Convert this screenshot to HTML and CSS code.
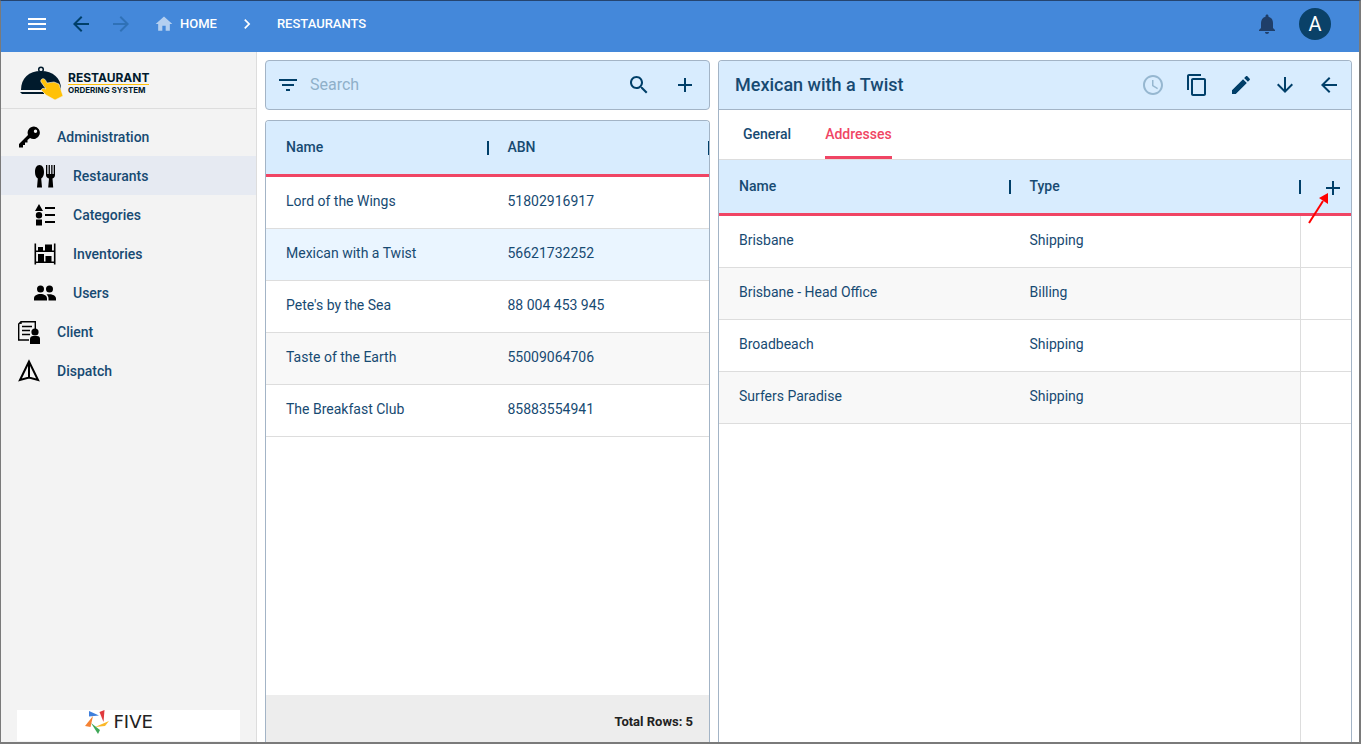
FILE: index.html
```html
<!DOCTYPE html>
<html lang="en">
<head>
    <meta charset="UTF-8">
    <meta name="viewport" content="width=device-width, initial-scale=1.0">
    <title>Restaurant Ordering System</title>
    <link rel="stylesheet" href="styles.css">
</head>
<body>
    <div class="app">
        <header class="topbar">
            <button class="icon-btn light" aria-label="Menu"><svg viewBox="0 0 24 24"><path d="M3 18h18v-2H3v2zm0-5h18v-2H3v2zm0-7v2h18V6H3z"/></svg></button>
            <button class="icon-btn back" aria-label="Back"><svg viewBox="0 0 24 24"><path d="M20 11H7.83l5.59-5.59L12 4l-8 8 8 8 1.41-1.41L7.83 13H20v-2z"/></svg></button>
            <button class="icon-btn forward" aria-label="Forward" disabled><svg viewBox="0 0 24 24"><path d="M12 4l-1.41 1.41L16.17 11H4v2h12.17l-5.58 5.59L12 20l8-8z"/></svg></button>
            <nav class="breadcrumb" aria-label="Breadcrumb">
                <a href="#"><svg class="home" viewBox="0 0 24 24"><path d="M10 20v-6h4v6h5v-8h3L12 3 2 12h3v8z"/></svg>HOME</a>
                <svg class="chevron" viewBox="0 0 24 24"><path d="M10 6L8.59 7.41 13.17 12l-4.58 4.59L10 18l6-6z"/></svg>
                <a href="#">RESTAURANTS</a>
            </nav>
            <button class="icon-btn bell" aria-label="Notifications"><svg viewBox="0 0 24 24"><path d="M12 22c1.1 0 2-.9 2-2h-4c0 1.100.89 2 2 2zm6-6v-5c0-3.070-1.640-5.640-4.500-6.320V4c0-.83-.67-1.500-1.500-1.500s-1.500.67-1.500 1.500v.68C7.630 5.360 6 7.920 6 11v5l-2 2v1h16v-1l-2-2z"/></svg></button>
            <button class="avatar">A</button>
        </header>

        <aside class="sidebar">
            <div class="brand">
                <svg class="brand-icon" viewBox="0 0 44 34">
                    <circle cx="21" cy="3.500" r="2.300" fill="none" stroke="#001a2c" stroke-width="1.500"/>
                    <path d="M1 24C1 12 9 5 21 5s20 7 20 18v1z" fill="#001a2c"/>
                    <path d="M0 26h24v2H2z" fill="#001a2c"/>
                    <path d="M22 13c2-1 3.500.5 5 4l7-1 5 2 4 12-8 4-9-5-5-5c1-2 3-2 5-1l-5-7c-.6-1.300 0-2.400 1-3z" fill="#ffc107" stroke="#f3f3f3" stroke-width=".6"/>
                </svg>
                <div class="brand-name">
                    <span class="brand-main">RESTAURANT</span>
                    <span class="brand-sub">ORDERING SYSTEM</span>
                </div>
            </div>

            <nav class="menu">
                <a href="#"><svg viewBox="0 0 24 24"><path fill-rule="evenodd" d="M17 1.500a6.300 6.300 0 0 0-6 8.500L2 19v3.500h4V20h2v-2.500h2.500V15l2.500-2a6.300 6.300 0 1 0 4-11.500zm1.500 3a1.700 1.700 0 1 1 0 3.400 1.700 1.700 0 0 1 0-3.400z"/></svg>Administration</a>
                <a href="#" class="nested active"><svg viewBox="0 0 24 24"><path d="M6.500 1C9.500 1 11 4.200 11 8c0 3-1 5.500-2.800 6.400L9 23.500H4l.8-9.100C3 13.500 2 11 2 8c0-3.800 1.500-7 4.500-7zM13 1h1.300v9h1.300V1h1.300v9h1.300V1h1.300v9h1.200V1H22v10c0 2-1 3-2.500 3.500l.7 9h-5l.8-9C14.200 14 13 13 13 11z"/></svg>Restaurants</a>
                <a href="#" class="nested"><svg viewBox="0 0 24 24"><path d="M6 1l4 7H2zM6 9a3.200 3.200 0 1 1 0 6.400A3.200 3.200 0 0 1 6 9zM3 16.500h6v6H3zM12 4h10v2H12zM12 11h10v2H12zM12 18h10v2H12z"/></svg>Categories</a>
                <a href="#" class="nested"><svg viewBox="0 0 24 24"><path d="M1.500 1.500h1.600v7h17.800v-7h1.600v21h-1.600V21H3.100v1.500H1.500zM3.100 10v9.500h17.800V10z" fill-rule="evenodd"/><path d="M5 5h5v4H5zM12 2.500h7V9h-7zM5 12h6v8H5zM12.500 14h6v6h-6z"/></svg>Inventories</a>
                <a href="#" class="nested"><svg viewBox="0 0 24 24"><path d="M7.500 4.500a3.500 3.500 0 1 1 0 7 3.500 3.500 0 0 1 0-7zM16.500 4.500a3.500 3.500 0 1 1 0 7 3.500 3.500 0 0 1 0-7zM1 19.500v-2C1 14.500 4 13 7.500 13s6.500 1.500 6.500 4.500v2zM15.500 19.500v-2c0-1.800-.8-3-2-4 4.500-1 9.500.5 9.500 4v2z"/></svg>Users</a>
                <a href="#"><svg viewBox="0 0 24 24"><path d="M12 20H1.700V4L4 1.700h14.300V9M4 1.700V4M5 6.500h10M5 10.500h8M5 14.500h8" fill="none" stroke="#000" stroke-width="1.400"/><circle cx="18" cy="12" r="3.600"/><path d="M13 24v-5c0-2 1.500-3 3-3h4c2 0 3 1 3 3v5z"/></svg>Client</a>
                <a href="#"><svg viewBox="0 0 24 24"><path d="M12 2.500L3 21l9-2.500 9 2.500zM12 2.500v16" fill="none" stroke="#000" stroke-width="2"/></svg>Dispatch</a>
            </nav>

            <div class="vendor">
                <div class="vendor-logo">
                    <svg viewBox="0 0 24 24">
                        <path d="M4 1l10 4.500-10 1z" fill="#3f7fdc"/>
                        <path d="M19.500 0l-1 12-4-10z" fill="#e03a3e"/>
                        <path d="M24 11l-4 5-10 1z" fill="#fbb829"/>
                        <path d="M6 13l9 7-2 4z" fill="#3fa757"/>
                        <path d="M8 6L5.500 17 0 16z" fill="#f58233"/>
                    </svg>
                    <span>FIVE</span>
                </div>
            </div>
        </aside>

        <main class="content">
            <section class="list">
                <div class="search panel">
                    <button class="icon-btn" aria-label="Filter"><svg viewBox="0 0 24 24"><path d="M10 18h4v-2h-4v2zM3 6v2h18V6H3zm3 7h12v-2H6v2z"/></svg></button>
                    <input type="text" placeholder="Search" aria-label="Search">
                    <button class="icon-btn" aria-label="Run search"><svg viewBox="0 0 24 24"><path d="M15.500 14h-.79l-.28-.27C15.410 12.590 16 11.110 16 9.500 16 5.910 13.090 3 9.500 3S3 5.910 3 9.500 5.910 16 9.500 16c1.610 0 3.090-.59 4.230-1.570l.27.28v.79l5 4.990L20.490 19l-4.990-5zm-6 0C7.010 14 5 11.990 5 9.500S7.010 5 9.500 5 14 7.010 14 9.500 11.990 14 9.500 14z"/></svg></button>
                    <button class="icon-btn" aria-label="Add restaurant"><svg viewBox="0 0 24 24"><path d="M19 13h-6v6h-2v-6H5v-2h6V5h2v6h6v2z"/></svg></button>
                </div>
                <div class="list-table panel">
                    <table class="grid">
                        <thead>
                            <tr><th>Name</th><th>ABN</th></tr>
                        </thead>
                        <tbody>
                            <tr><td>Lord of the Wings</td><td>51802916917</td></tr>
                            <tr class="selected"><td>Mexican with a Twist</td><td>56621732252</td></tr>
                            <tr><td>Pete's by the Sea</td><td>88 004 453 945</td></tr>
                            <tr><td>Taste of the Earth</td><td>55009064706</td></tr>
                            <tr><td>The Breakfast Club</td><td>85883554941</td></tr>
                        </tbody>
                    </table>
                    <div class="total">Total Rows: 5</div>
                </div>
            </section>

            <section class="detail panel">
                <div class="detail-header">
                    <h1>Mexican with a Twist</h1>
                    <button class="icon-btn" aria-label="History" disabled><svg viewBox="0 0 24 24"><path d="M11.990 2C6.470 2 2 6.480 2 12s4.470 10 9.990 10C17.520 22 22 17.520 22 12S17.520 2 11.990 2zM12 20c-4.420 0-8-3.580-8-8s3.580-8 8-8 8 3.580 8 8-3.580 8-8 8zm.5-13H11v6l5.250 3.150.75-1.230-4.500-2.670z"/></svg></button>
                    <button class="icon-btn" aria-label="Copy"><svg viewBox="0 0 24 24"><path d="M16 1H4c-1.100 0-2 .9-2 2v14h2V3h12V1zm3 4H8c-1.100 0-2 .9-2 2v14c0 1.100.9 2 2 2h11c1.100 0 2-.9 2-2V7c0-1.100-.9-2-2-2zm0 16H8V7h11v14z"/></svg></button>
                    <button class="icon-btn" aria-label="Edit"><svg viewBox="0 0 24 24"><path d="M3 17.250V21h3.750L17.810 9.940l-3.750-3.750L3 17.250zM20.710 7.040c.39-.39.39-1.020 0-1.410l-2.340-2.340c-.39-.39-1.020-.39-1.410 0l-1.830 1.830 3.750 3.750 1.830-1.830z"/></svg></button>
                    <button class="icon-btn" aria-label="Next"><svg viewBox="0 0 24 24"><path d="M20 12l-1.410-1.410L13 16.170V4h-2v12.170l-5.580-5.590L4 12l8 8 8-8z"/></svg></button>
                    <button class="icon-btn" aria-label="Close"><svg viewBox="0 0 24 24"><path d="M20 11H7.830l5.590-5.590L12 4l-8 8 8 8 1.410-1.410L7.830 13H20v-2z"/></svg></button>
                </div>
                <div class="tabs" role="tablist">
                    <button role="tab" aria-selected="false">General</button>
                    <button role="tab" aria-selected="true" class="active">Addresses</button>
                </div>
                <div class="address-table">
                    <table class="grid">
                        <thead>
                            <tr>
                                <th>Name</th>
                                <th>Type</th>
                                <th class="action"><button class="icon-btn" aria-label="Add address"><svg viewBox="0 0 24 24"><path d="M19 13h-6v6h-2v-6H5v-2h6V5h2v6h6v2z"/></svg></button></th>
                            </tr>
                        </thead>
                        <tbody>
                            <tr><td>Brisbane</td><td>Shipping</td><td class="action"></td></tr>
                            <tr><td>Brisbane - Head Office</td><td>Billing</td><td class="action"></td></tr>
                            <tr><td>Broadbeach</td><td>Shipping</td><td class="action"></td></tr>
                            <tr><td>Surfers Paradise</td><td>Shipping</td><td class="action"></td></tr>
                            <tr class="filler"><td></td><td></td><td class="action"></td></tr>
                        </tbody>
                    </table>
                    <svg class="pointer" viewBox="0 0 20 32"><path d="M1 31L15 9" stroke="#f00" stroke-width="2"/><path d="M20 1v11l-9-6z" fill="#f00"/></svg>
                </div>
            </section>
        </main>
    </div>
</body>
</html>
```
FILE: styles.css
```css
* {
    box-sizing: border-box;
}

body {
    margin: 0;
    font-family: Roboto, Arial, sans-serif;
    font-size: 14px;
    line-height: 20px;
    color: #174a72;
    background: white;
}

/* window frame */
body::after {
    content: '';
    position: fixed;
    inset: 0;
    border: solid #7a7a7a;
    border-width: 1px 2px 2px 1px;
    border-top-color: #25446f;
    pointer-events: none;
}

button {
    font: inherit;
    color: inherit;
    border: none;
    background: none;
    padding: 0;
    cursor: pointer;
}

a {
    color: inherit;
    text-decoration: none;
}

svg {
    display: block;
    fill: currentColor;
    flex-shrink: 0;
}

.app {
    display: grid;
    grid-template-columns: 256px minmax(0, 1fr);
    grid-template-rows: 52px minmax(0, 1fr);
    height: 100vh;
    padding: 0 1px;
}

.icon-btn {
    display: block;
    width: 24px;
    height: 24px;
    flex-shrink: 0;
    color: #003f69;
}

.icon-btn:disabled {
    opacity: 0.3;
    cursor: default;
}

/* top bar */
.topbar {
    grid-column: 1 / -1;
    display: flex;
    align-items: center;
    padding: 0 29px 4px 24px;
    background: #4488da;
    color: white;
}

.topbar .light {
    color: white;
}

.topbar .back {
    margin-left: 20px;
}

.topbar .forward {
    margin: 0 21px 0 16px;
}

.breadcrumb {
    display: flex;
    align-items: center;
    gap: 20px;
    flex: 1;
    font-size: 13px;
    font-weight: 500;
}

.breadcrumb a {
    display: flex;
    align-items: center;
    gap: 6px;
}

.breadcrumb svg {
    width: 20px;
    height: 20px;
}

.breadcrumb .home {
    opacity: 0.6;
}

.topbar .bell {
    color: #1f3e69;
    margin-right: 20px;
}

.avatar {
    width: 32px;
    height: 32px;
    border-radius: 50%;
    background: #0a4168;
    color: white;
    font-size: 20px;
}

/* sidebar */
.sidebar {
    display: flex;
    flex-direction: column;
    background: #f3f3f3;
    border-right: 1px solid #ddd;
}

.brand {
    display: flex;
    align-items: center;
    gap: 4px;
    height: 57px;
    padding: 6px 19px 0;
    border-bottom: 1px solid #ddd;
}

.brand-icon {
    width: 44px;
    height: 34px;
}

.brand-name {
    display: flex;
    flex-direction: column;
    font-family: Inter, sans-serif;
    font-weight: 700;
    color: #001a2c;
}

.brand-main {
    font-size: 12px;
    line-height: 12px;
    border-bottom: 1px solid #ffc107;
}

.brand-sub {
    font-size: 8px;
    line-height: 10px;
}

.menu {
    display: flex;
    flex-direction: column;
    flex: 1;
    padding-top: 8px;
}

.menu a {
    display: flex;
    align-items: center;
    gap: 16px;
    height: 39px;
    padding-left: 16px;
    font-weight: 500;
}

.menu svg {
    width: 24px;
    height: 24px;
    color: black;
}

.menu .nested {
    padding-left: 32px;
}

.menu .active {
    background: #e6eaf2;
}

.vendor {
    height: 31px;
    margin: 0 16px 3px;
    background: white;
}

.vendor-logo {
    display: flex;
    align-items: center;
    gap: 5px;
    width: 88px;
    margin: 0 auto;
    color: #222;
    font-family: "DejaVu Sans", sans-serif;
    font-size: 18px;
    line-height: 24px;
}

.vendor-logo svg {
    width: 24px;
    height: 24px;
}

/* content */
.content {
    display: grid;
    grid-template-columns: 445fr 634fr;
    gap: 8px;
    padding: 8px 8px 0;
    min-height: 0;
}

.panel {
    border: 1px solid #a3b4c6;
    border-radius: 4px;
    overflow: hidden;
}

.list {
    display: flex;
    flex-direction: column;
    gap: 10px;
    min-width: 0;
}

.search {
    display: flex;
    align-items: center;
    height: 50px;
    padding: 0 12px 0 10px;
    background: #d8ecfe;
}

.search input {
    flex: 1;
    min-width: 0;
    margin-left: 10px;
    padding: 0;
    border: none;
    outline: none;
    background: none;
    font: inherit;
    font-size: 16px;
    color: #174a72;
}

.search input::placeholder {
    color: #8fb0c9;
    opacity: 1;
}

.search input + .icon-btn {
    margin-right: 22px;
}

.list-table,
.detail {
    display: flex;
    flex-direction: column;
    flex: 1;
    min-width: 0;
    border-bottom: none;
    border-radius: 4px 4px 0 0;
}

.total {
    height: 49px;
    margin-top: auto;
    padding: 17px 16px 0;
    background: #ededed;
    color: #222;
    font-size: 13px;
    font-weight: 700;
    text-align: right;
}

/* tables */
.grid {
    width: 100%;
    table-layout: fixed;
    border-collapse: separate;
    border-spacing: 0;
}

.grid th {
    position: relative;
    height: 56px;
    padding: 0 20px 2px;
    background: #d8ecfe;
    border-bottom: 3px solid #f04564;
    font-weight: 500;
    text-align: left;
}

.grid th:not(.action)::after {
    content: '';
    position: absolute;
    z-index: 1;
    right: -1px;
    top: 20px;
    width: 2px;
    height: 14px;
    background: #003f69;
}

.grid td {
    height: 52px;
    padding: 0 20px 3px;
    border-bottom: 1px solid #ddd;
}

.grid tr:nth-child(even) td {
    background: #f8f8f8;
}

.grid .selected td,
.grid tr.selected:nth-child(even) td {
    background: #eaf5ff;
}

/* detail */
.detail-header {
    display: flex;
    align-items: center;
    gap: 20px;
    height: 49px;
    padding: 0 10px 0 16px;
    background: #d8ecfe;
    border-bottom: 1px solid #a3b4c6;
}

.detail-header h1 {
    flex: 1;
    margin: 0;
    font-size: 18px;
    font-weight: 500;
}

.tabs {
    display: flex;
    gap: 34px;
    height: 50px;
    padding: 0 24px;
    border-bottom: 1px solid #ddd;
}

.tabs button {
    padding-top: 2px;
    border-bottom: 3px solid transparent;
    font-weight: 500;
}

.tabs .active {
    color: #f04564;
    border-bottom-color: #f04564;
}

.address-table {
    position: relative;
    flex: 1;
}

.address-table .grid {
    height: 100%;
}

.grid .action {
    width: 51px;
}

.grid th.action {
    padding: 2px 6px 0 0;
}

.action .icon-btn {
    margin-left: auto;
}

.grid td.action,
.grid tr:nth-child(even) td.action {
    padding: 0;
    background: white;
    border-left: 1px solid #ddd;
}

.grid .filler td {
    height: auto;
    border-bottom: none;
}

.pointer {
    position: absolute;
    right: 23px;
    top: 32px;
    width: 20px;
    height: 32px;
    z-index: 2;
}
```
